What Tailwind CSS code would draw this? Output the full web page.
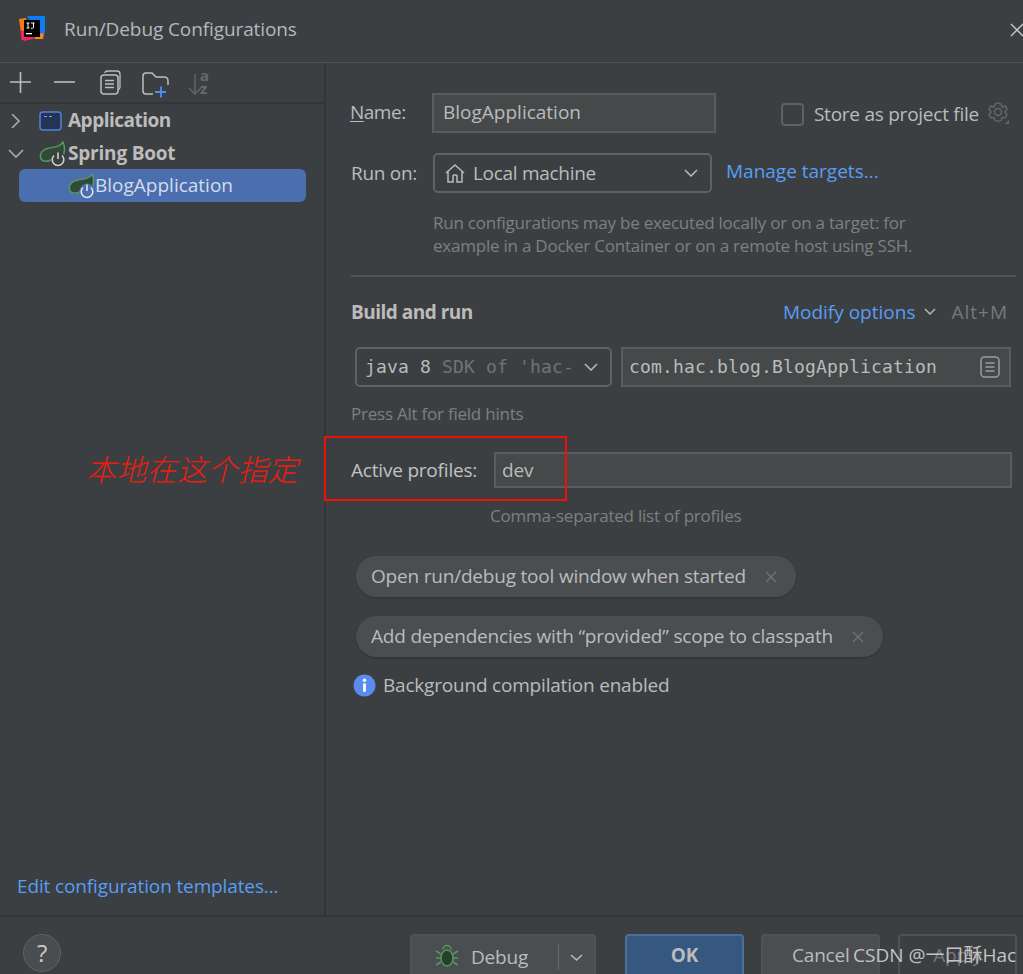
<!DOCTYPE html>
<html><head><meta charset="utf-8">
<script src="https://cdn.jsdelivr.net/npm/@tailwindcss/browser@4"></script>
</head>
<body class="m-0">
<div class="relative w-[1023px] h-[974px] overflow-hidden bg-[#3c3f41] text-[#bbbbbb] font-['Open_Sans','Noto_Sans_CJK_SC',sans-serif] text-[19px] tracking-[-0.2px] flex flex-col">
  <!-- title -->
  <header class="h-[63px] shrink-0 border-b border-[#4e5052] flex items-center pl-[19px] relative">
    <svg width="26" height="26" viewBox="0 0 26 26" class="mr-[19px] -mt-[4px]">
      <path d="M0 3l7-1 4 20-8 2z" fill="#fb7a18"/><path d="M8 0h18v17l-7 2z" fill="#0d7bf7"/><path d="M2 14l14 5-2 4-9 2-3-3z" fill="#f4255d"/><path d="M18 18l7-1-1 6-9 0z" fill="#f9841a"/>
      <rect x="5" y="4" width="16" height="17" fill="#000"/><rect x="7" y="17" width="6" height="1.3" fill="#fff"/>
      <path d="M7.500 7h3M9 7v5M7.500 12h3M12 7h3.500M14.500 7v4.500q0 .8-1 .8h-1.500" stroke="#fff" stroke-width="1" fill="none"/>
    </svg>
    <span class="text-[#b4b8bb] leading-none -mt-[4px] tracking-[-0.1px]">Run/Debug Configurations</span>
    <svg width="14" height="14" viewBox="0 0 14 14" class="absolute left-[1010px] top-[23px]"><path d="M1 1l12 12M13 1L1 13" stroke="#c8c8c8" stroke-width="1.400"/></svg>
  </header>

  <div class="flex flex-1 min-h-0">
    <!-- left -->
    <aside class="w-[326px] shrink-0 border-r-2 border-[#333638] flex flex-col">
      <div class="h-[41px] shrink-0 border-b-2 border-[#333638] flex items-center relative">
        <svg width="220" height="32" viewBox="0 0 220 32" fill="none" class="-mt-[1px] overflow-visible">
          <path d="M10 16h21M20.500 6v21" stroke="#bdbdbd" stroke-width="1.600"/>
          <path d="M54 16h21" stroke="#bdbdbd" stroke-width="1.600"/>
          <rect x="101" y="9" width="17" height="19" rx="3" stroke="#bdbdbd" stroke-width="1.500"/>
          <path d="M105 7q0-2 3-2h9q3 0 3 3v13q0 2-2 3" stroke="#bdbdbd" stroke-width="1.300"/>
          <path d="M105 14.500h9M105 18h9M105 21.500h9" stroke="#bdbdbd" stroke-width="1.300"/>
          <path d="M153 28h-7q-3 0-3-3V10q0-3 3-3h6l4 4h8q4 0 4 4v4" stroke="#bdbdbd" stroke-width="1.500"/>
          <path d="M155 26h11M161 20.500v11" stroke="#4f8ff5" stroke-width="1.800"/>
          <path d="M195 8v20M189 22l6 6 6-6" stroke="#616365" stroke-width="1.500"/>
          <text x="200" y="15" font-size="15" font-weight="700" fill="#67696b">a</text>
          <text x="200" y="28" font-size="15" font-weight="700" fill="#67696b">z</text>
        </svg>
      </div>
      <div class="flex-1 relative">
        <div class="h-[33px] flex items-center">
          <svg width="14" height="14" viewBox="0 0 14 14" class="ml-[8px] mr-[17px]" fill="none"><path d="M4 0l7 7-7 7" stroke="#a9abad" stroke-width="1.600"/></svg>
          <svg width="24" height="20" viewBox="0 0 24 20" class="mr-[5px]" fill="none"><rect x="1" y="1" width="21" height="18" rx="3" fill="#243454" stroke="#4f82d6" stroke-width="1.500"/><path d="M5 5.500h3M10 5.500h3" stroke="#7fa3de" stroke-width="1.200"/></svg>
          <span class="font-bold text-[#bcbcbc] tracking-[-0.5px]">Application</span>
        </div>
        <div class="h-[33px] flex items-center">
          <svg width="16" height="10" viewBox="0 0 16 10" class="ml-[8px] mr-[15px]" fill="none"><path d="M1 1l7 7 7-7" stroke="#a9abad" stroke-width="1.600"/></svg>
          <svg width="28" height="26" viewBox="0 0 28 26" class="mr-[1px]" fill="none"><path d="M2 18c-2-6 2-10 8-11 6-1 11-1 14-6 2 5 2 11-1 15-3 2-6 1-9 2-5 3-10 3-12 0z" fill="#2f4a36" stroke="#57965c" stroke-width="1.500"/><circle cx="19" cy="18" r="7.500" fill="#3c3f41"/><path d="M15 14.500a5.800 5.800 0 1 0 8 0M19 11.500v6.500" stroke="#cfcfcf" stroke-width="1.600"/></svg>
          <span class="font-bold text-[#bcbcbc] tracking-[-0.2px]">Spring Boot</span>
        </div>
        <div class="ml-[19px] w-[287px] h-[33px] -mt-[1px] rounded-[6px] bg-[#4b6eaf] flex items-center pl-[50px] text-[#d4dceb] tracking-normal">
          <svg width="28" height="26" viewBox="0 0 28 26" class="-ml-[1px] shrink-0" fill="none"><path d="M2 18c-2-6 2-10 8-11 6-1 11-1 14-6 2 5 2 11-1 15-3 2-6 1-9 2-5 3-10 3-12 0z" fill="#2f4a36" stroke="#57965c" stroke-width="1.500"/><circle cx="19" cy="18" r="7.500" fill="#4b6eaf"/><path d="M15 14.500a5.800 5.800 0 1 0 8 0M19 11.500v6.500" stroke="#dfe3ea" stroke-width="1.600"/></svg>
          <span class="-ml-[1px] -mt-[1px]">BlogApplication</span>
        </div>
        <div class="absolute left-[17px] top-[770px] text-[#589df6] leading-[24px] tracking-[-0.13px]">Edit configuration templates...</div>
      </div>
    </aside>

    <!-- right -->
    <main class="flex-1 min-w-0 pl-[25px] pr-[13px] pt-[30px] flex flex-col">
      <div class="h-[40px] flex items-center">
        <span class="w-[82px] -ml-[1px] -mt-[2px] shrink-0 tracking-[-0.5px]"><span class="underline underline-offset-2">N</span>ame:</span>
        <div class="w-[284px] h-[40px] border-2 border-[#5a5d5f] bg-[#45494a] flex items-center pl-[9px] tracking-normal"><span class="-mt-[2px]">BlogApplication</span></div>
        <div class="w-[23px] h-[23px] ml-[65px] mt-[2px] border-2 border-[#5f6163] bg-[#3c3f41] rounded-[4px] shrink-0"></div>
        <span class="ml-[10px] mt-[3px] whitespace-nowrap tracking-[-0.25px]">Store as project file</span>
        <svg width="24" height="26" viewBox="0 0 24 26" fill="none" class="ml-[7px] shrink-0"><path d="M12 3l3 1 1 3 3-1 2 3-2 3 2 3-2 3-3-.5-1 3-3 1-3-1-1-3-3 .5-2-3 2-3-2-3 2-3 3 1 1-3z" stroke="#636567" stroke-width="1.500"/><circle cx="12" cy="12" r="3.500" stroke="#636567" stroke-width="1.500"/><path d="M23 20v4h-4z" fill="#636567"/></svg>
      </div>
      <div class="h-[40px] mt-[20px] flex items-center">
        <span class="w-[82px] shrink-0 tracking-[-0.3px]">Run on:</span>
        <div class="w-[279px] h-[40px] border-2 border-[#5f6163] rounded-[5px] flex items-center pl-[10px] shrink-0">
          <svg width="20" height="20" viewBox="0 0 20 20" fill="none" class="shrink-0"><path d="M1 10l9-8 9 8M3 8.500V19h5v-6q0-1 1-1h2q1 0 1 1v6h5V8.500" stroke="#bbbbbb" stroke-width="1.500"/></svg>
          <span class="ml-[8px] mt-[1px] tracking-[-0.3px]">Local machine</span>
          <svg width="14" height="8" viewBox="0 0 14 8" class="ml-auto mr-[12px]" fill="none"><path d="M1 1l6 6 6-6" stroke="#bbbbbb" stroke-width="1.500"/></svg>
        </div>
        <span class="ml-[14px] -mt-[3px] text-[#589df6] whitespace-nowrap tracking-normal">Manage targets...</span>
      </div>
      <div class="ml-[82px] mt-[18px] text-[17px] leading-[23px] text-[#7d8082] whitespace-nowrap tracking-[-0.23px]">Run configurations may be executed locally or on a target: for<br>example in a Docker Container or on a remote host using SSH.</div>
      <div class="h-[2px] bg-[#4f5254] mt-[18px] w-[665px]"></div>
      <div class="h-[24px] mt-[23px] flex items-center">
        <span class="font-bold text-[#bcbcbc] tracking-[-0.5px]">Build and run</span>
        <span class="ml-auto text-[#589df6] tracking-normal">Modify options</span>
        <svg width="12" height="7" viewBox="0 0 12 7" class="ml-[9px] -mt-[1px]" fill="none"><path d="M1 1l5 5 5-5" stroke="#b5b5b5" stroke-width="1.500"/></svg>
        <span class="ml-[15px] mr-[2px] text-[#76797b] tracking-[1px]">Alt+M</span>
      </div>
      <div class="h-[40px] mt-[23px] flex items-center font-['DejaVu_Sans_Mono','Liberation_Mono',monospace] text-[18px] tracking-[0.16px]">
        <div class="w-[257px] ml-[4px] h-[40px] border-2 border-[#5f6163] rounded-[5px] flex items-center pl-[8px] shrink-0 whitespace-nowrap overflow-hidden">
          <span class="-mt-[1px]">java 8</span><span class="ml-[11px] -mt-[1px] text-[#707375]">SDK of 'hac-</span>
          <svg width="14" height="8" viewBox="0 0 14 8" class="ml-auto mr-[12px] shrink-0" fill="none"><path d="M1 1l6 6 6-6" stroke="#bbbbbb" stroke-width="1.500"/></svg>
        </div>
        <div class="w-[390px] h-[40px] ml-[9px] border-2 border-[#5a5d5f] bg-[#45494a] flex items-center pl-[6px] shrink-0 whitespace-nowrap">
          <span class="-mt-[2px]">com.hac.blog.BlogApplication</span>
          <svg width="20" height="22" viewBox="0 0 20 22" class="ml-auto mr-[9px]" fill="none"><rect x="1" y="1" width="18" height="20" rx="3.500" stroke="#9a9c9e" stroke-width="1.500"/><path d="M5.500 7h9M5.500 11h9M5.500 15h9" stroke="#9a9c9e" stroke-width="1.500"/></svg>
        </div>
      </div>
      <div class="mt-[15px] h-[24px] text-[17px] leading-[24px] text-[#7d8082] tracking-[-0.23px]">Press Alt for field hints</div>
      <div class="h-[36px] mt-[26px] flex items-center">
        <span class="w-[143px] shrink-0 text-[#c2c2c2]">Active profiles:</span>
        <div class="w-[518px] h-[36px] border-2 border-[#5a5d5f] bg-[#45494a] flex items-center pl-[6px] shrink-0">dev</div>
      </div>
      <div class="ml-[139px] mt-[16px] h-[24px] text-[17px] leading-[24px] text-[#7d8082] tracking-[-0.23px]">Comma-separated list of profiles</div>
      <div class="flex flex-col items-start mt-[28px] ml-[5px] gap-[19px]">
        <div class="h-[41px] rounded-full bg-[#4b4e50] shadow-[0_1px_2px_#2f3133] flex items-center pl-[15px] pr-[19px] whitespace-nowrap">
          Open run/debug tool window when started
          <svg width="12" height="12" viewBox="0 0 12 12" class="ml-[19px]" fill="none"><path d="M1 1l10 10M11 1L1 11" stroke="#707375" stroke-width="1.400"/></svg>
        </div>
        <div class="h-[41px] rounded-full bg-[#4b4e50] shadow-[0_1px_2px_#2f3133] flex items-center pl-[15px] pr-[19px] whitespace-nowrap">
          Add dependencies with “provided” scope to classpath
          <svg width="12" height="12" viewBox="0 0 12 12" class="ml-[19px]" fill="none"><path d="M1 1l10 10M11 1L1 11" stroke="#707375" stroke-width="1.400"/></svg>
        </div>
      </div>
      <div class="flex items-center h-[24px] mt-[16px] ml-[2px]">
        <svg width="23" height="23" viewBox="0 0 22 22" class="mr-[7px]"><circle cx="11" cy="11" r="10.500" fill="#5a8cf0"/><rect x="9.700" y="9" width="2.600" height="8" fill="#fff"/><circle cx="11" cy="6" r="1.600" fill="#fff"/></svg>
        <span>Background compilation enabled</span>
      </div>
    </main>
  </div>

  <!-- footer -->
  <footer class="h-[59px] shrink-0 border-t-2 border-[#333638] flex items-start pl-[23px] pt-[17px]">
    <div class="w-[38px] h-[38px] rounded-full border border-[#5f6264] bg-[#4a4d4f] flex items-center justify-center text-[24px] text-[#c8c8c8] shrink-0">?</div>
    <div class="ml-[349px] w-[186px] h-[44px] border-2 border-[#505355] bg-[#4b4e50] rounded-[4px] flex items-start pt-[8px] shrink-0">
      <svg width="24" height="24" viewBox="0 0 24 24" class="ml-[23px]" fill="none"><ellipse cx="12" cy="14" rx="6" ry="8" fill="#26402c" stroke="#57965c" stroke-width="1.500"/><path d="M8 5.500a4 4 0 0 1 8 0M1 7l5 3M23 7l-5 3M1 14h5M23 14h-5M1 21l5-3M23 21l-5-3" stroke="#57965c" stroke-width="1.500"/></svg>
      <span class="ml-[12px] -mt-[1px]">Debug</span>
      <span class="ml-[30px] w-[1px] h-[26px] bg-[#66696b]"></span>
      <svg width="13" height="7" viewBox="0 0 13 7" class="ml-[11px] mt-[10px]" fill="none"><path d="M1 1l5.500 5 5.500-5" stroke="#bbbbbb" stroke-width="1.500"/></svg>
    </div>
    <div class="ml-[29px] w-[119px] h-[44px] border-2 border-[#4a7199] bg-[#365880] rounded-[4px] font-bold text-center pt-[5px] shrink-0">OK</div>
    <div class="ml-[17px] w-[119px] h-[44px] border-2 border-[#505355] bg-[#4b4e50] rounded-[4px] pl-[29px] pt-[5px] shrink-0">Cancel</div>
    <div class="ml-[18px] w-[119px] h-[44px] border-2 border-[#505355] rounded-[4px] text-center pt-[5px] text-[#75787a] shrink-0">Apply</div>
  </footer>

  <!-- annotations -->
  <div class="absolute left-[324px] top-[436px] w-[243px] h-[65px] border-2 border-[#f01008]"></div>
  <div class="absolute left-[86px] top-[448px] text-[30px] leading-[40px] italic font-light tracking-[0.3px] text-[#ee1b10] whitespace-nowrap font-['Noto_Sans_CJK_SC',sans-serif]">本地在这个指定</div>
  <div class="absolute left-[853px] top-[942px] leading-[26px] text-[#c3c3c3] whitespace-nowrap tracking-normal">CSDN @一口酥Hac</div>
</div>
</body></html>
